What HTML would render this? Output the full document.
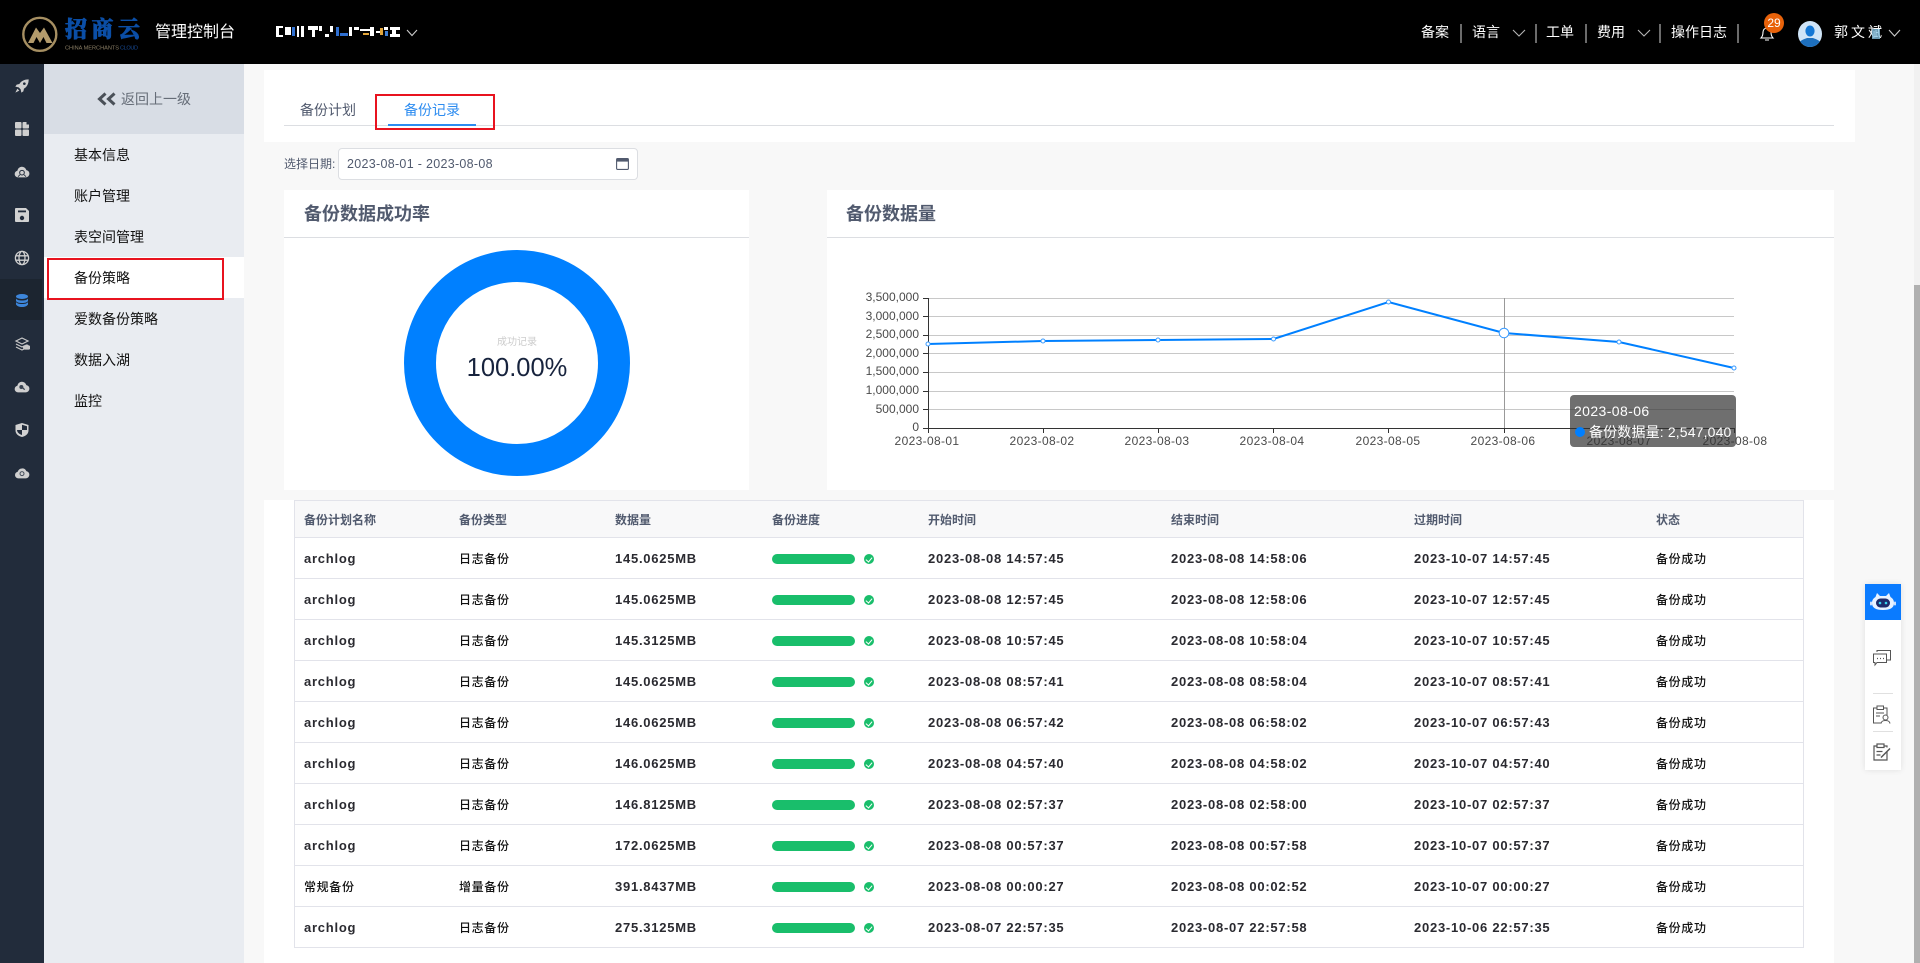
<!DOCTYPE html>
<html lang="zh-CN">
<head>
<meta charset="utf-8">
<title>备份记录</title>
<style>
*{box-sizing:border-box}
html,body{margin:0;padding:0;width:1920px;height:963px;overflow:hidden;background:#f8f8f8;font-family:"Liberation Sans","Noto Sans CJK SC",sans-serif;color:#333}
.a{position:absolute;white-space:nowrap}
.top{left:0;top:0;width:1920px;height:64px;background:#000}
.w{color:#fff;font-size:14px;line-height:20px;top:22px}
.sep{top:24px;width:2px;height:19px;background:#6b6b6b}
.rail{left:0;top:64px;width:44px;height:899px;background:#222c3b}
.ri{left:14px;width:16px;height:16px;display:block}
.sub{left:44px;top:64px;width:200px;height:899px;background:#e9ecf1}
.m{left:74px;font-size:14px;line-height:20px;color:#111}
.card{background:#fff}
.ct{font-size:18px;font-weight:bold;color:#515a6e;line-height:24px}
.hl{height:1px;background:#dcdee2}
table{border-collapse:separate;border-spacing:0;table-layout:fixed;width:1508px}
th,td{padding:0 0 0 8px;font-size:12px;text-align:left;white-space:nowrap;border-bottom:1px solid #e2e3ea}
th{height:37px;background:#f8f8f9;color:#515a6e;font-weight:bold}
td{height:41px;color:#2a2a30;font-weight:bold;font-size:13px;letter-spacing:.75px}
td.c{font-weight:500;font-size:12px;letter-spacing:.65px;color:#111}
th:first-child,td:first-child{padding-left:9px}
.b{display:inline-block;width:83px;height:10px;border-radius:5px;background:#19be6b;vertical-align:middle}
.k{display:inline-block;position:relative;width:10px;height:10px;border-radius:50%;background:#19be6b;margin-left:9px;vertical-align:middle}
.k:after{content:"";position:absolute;left:3px;top:2px;width:3px;height:5px;border:solid #fff;border-width:0 1px 1px 0;transform:rotate(40deg)}
.xl{font-size:12px;line-height:14px;color:#4a4a4a;top:434px;width:80px;text-align:center;letter-spacing:.35px}
.yl{font-size:12px;line-height:14px;color:#4a4a4a;width:60px;text-align:right;left:859px}
</style>
</head>
<body>
<div class="a top"></div>
<svg class="a" style="left:18px;top:12px" width="46" height="46" viewBox="18 12 46 46">
<circle cx="39.8" cy="34.3" r="16.5" fill="none" stroke="#a68f62" stroke-width="2.4"/>
<path d="M28 43L36 27.5L40 33L44 27.5L52.5 43H46.5L43.5 37L40 43L36.5 37L33.5 43Z" fill="#b39b6c"/>
</svg>
<div class="a" style="left:65px;top:15px;font:900 22px/30px 'Liberation Serif','Noto Serif CJK SC',serif;color:#0b4ea6;letter-spacing:4.5px;-webkit-text-stroke:.7px #0b4ea6">招商云</div>
<svg class="a" style="left:65px;top:43px" width="76" height="8"><text x="0" y="6.5" font-family="Liberation Sans" font-size="5.6" fill="#8b7f66" textLength="54">CHINA MERCHANTS</text><text x="55" y="6.5" font-family="Liberation Sans" font-size="5.6" fill="#174a94" textLength="18">CLOUD</text></svg>
<div class="a" style="left:155px;top:21px;font-size:16px;line-height:24px;color:#fff">管理控制台</div>
<svg class="a" style="left:276px;top:26px" width="124" height="11">
<path fill="#fff" d="M0 0h7v2H3v7h4v2H0zM9 1h6v8H9zM21 0h2v11h-2zM25 0h3v11h-3zM32 0h10v4h-3v7h-3V4h-4zM43 0h3v5h-3zM49 8h4v3h-4zM54 0h3v6h-3z"/>
<path fill="#2f6fd0" d="M16 1h3v9h-3zM60 1h3v9h-3zM64 7h8v3h-8z"/>
<path fill="#fff" d="M73 1h3v9h-3zM78 1h5v3h-5zM84 3h10v2H84zM94 1h4v9h-4zM100 5h5v2h-5zM108 1h4v3h-4zM114 1h10v3h-10zM114 8h10v3h-10zM116 4h4v4h-4z"/>
<path fill="#e3a63a" d="M87 7h6v2h-6zM104 2h3v7h-3z"/>
<path fill="#3e7fd6" d="M109 5h3v5h-3z"/>
</svg>
<svg class="a" style="left:406px;top:29px" width="12" height="8"><path d="M1 1l5 5.5L11 1" fill="none" stroke="#c9c9c9" stroke-width="1.1"/></svg>

<div class="a w" style="left:1421px">备案</div><div class="a sep" style="left:1460px"></div>
<div class="a w" style="left:1472px">语言</div>
<svg class="a" style="left:1512px;top:29px" width="14" height="8"><path d="M1 1l6 6 6-6" fill="none" stroke="#b5b5b5" stroke-width="1.1"/></svg>
<div class="a sep" style="left:1535px"></div>
<div class="a w" style="left:1546px">工单</div><div class="a sep" style="left:1585px"></div>
<div class="a w" style="left:1597px">费用</div>
<svg class="a" style="left:1637px;top:29px" width="14" height="8"><path d="M1 1l6 6 6-6" fill="none" stroke="#b5b5b5" stroke-width="1.1"/></svg>
<div class="a sep" style="left:1659px"></div>
<div class="a w" style="left:1671px">操作日志</div><div class="a sep" style="left:1737px"></div>
<svg class="a" style="left:1759px;top:24px" width="16" height="18" viewBox="0 0 16 18"><path d="M2 14c1.500-1.500 2-3 2-6a4 4 0 0 1 8 0c0 3 .5 4.500 2 6zM6 16h4" fill="none" stroke="#fff" stroke-width="1.100"/></svg>
<div class="a" style="left:1764px;top:13px;width:20px;height:20px;border-radius:50%;background:#e8620a;color:#fff;font-size:12px;line-height:20px;text-align:center">29</div>
<svg class="a" style="left:1798px;top:21px" width="24" height="26" viewBox="0 0 24 26"><defs><clipPath id="av"><ellipse cx="12" cy="13" rx="12" ry="13"/></clipPath></defs><g clip-path="url(#av)"><rect width="24" height="26" fill="#cfe4f7"/><ellipse cx="12" cy="10" rx="4.600" ry="5.500" fill="#1477d4"/><path d="M0 26v-3c2-4 7-5 9-6h6c2 1 7 2 9 6v3z" fill="#1d6fbd"/></g></svg>
<div class="a w" style="left:1834px;letter-spacing:3px;font-size:14px">郭文斌</div>
<div class="a" style="left:1872px;top:29px;width:8px;height:10px;background:#8ec9ea;opacity:.75"></div>
<svg class="a" style="left:1888px;top:29px" width="13" height="8"><path d="M1 1l5.500 6L12 1" fill="none" stroke="#c9c9c9" stroke-width="1.1"/></svg>

<!-- rail -->
<div class="a rail"></div>
<div class="a" style="left:0;top:279px;width:42px;height:41px;background:#1c2530"></div>
<svg class="a ri" style="top:78px" viewBox="0 0 24 24" fill="#cfcfcf"><path d="M22 2c-6 0-11 2-14 7l-4 1-2 3 5 1 3 3 1 5 3-2 1-4c5-3 7-8 7-14z"/><circle cx="15.500" cy="8.500" r="2" fill="#222c3b"/><path d="M5 16l-3 6 6-3z"/></svg>
<svg class="a ri" style="top:121px" viewBox="0 0 16 16"><rect x="1" y="1" width="6.500" height="6.500" rx="1" fill="#cfcfcf"/><rect x="8.500" y="1" width="6.500" height="6.500" rx="1" fill="#cfcfcf"/><rect x="12.500" y="1" width="2.500" height="2.500" fill="#222c3b"/><rect x="1" y="8.500" width="6.500" height="6.500" rx="1" fill="#cfcfcf"/><rect x="8.500" y="8.500" width="6.500" height="6.500" rx="1" fill="#cfcfcf"/></svg>
<svg class="a ri" style="top:164px" viewBox="0 0 24 24"><path d="M6 20a5 5 0 0 1-1-9.900 7 7 0 0 1 13.600-1A5.500 5.500 0 0 1 18 20z" fill="#cfcfcf"/><circle cx="12" cy="13" r="3.500" fill="none" stroke="#222c3b" stroke-width="1.500"/><path d="M6 19l3-3M18 19l-3-3" stroke="#222c3b" stroke-width="1.200"/></svg>
<svg class="a ri" style="top:207px" viewBox="0 0 16 16"><path d="M2 1h10l3 3v10a1 1 0 0 1-1 1H2a1 1 0 0 1-1-1V2a1 1 0 0 1 1-1z" fill="#d2d2d2"/><rect x="4" y="3.500" width="8" height="1.800" fill="#222c3b"/><circle cx="8" cy="11" r="2.200" fill="#222c3b"/></svg>
<svg class="a ri" style="top:250px" viewBox="0 0 16 16" fill="none" stroke="#cfcfcf" stroke-width="1.300"><circle cx="8" cy="8" r="6.600"/><ellipse cx="8" cy="8" rx="3" ry="6.600"/><path d="M1.500 5.800h13M1.500 10.200h13"/></svg>
<svg class="a ri" style="top:293px" viewBox="0 0 16 16" fill="#3d86da"><ellipse cx="8" cy="3.500" rx="6" ry="2.500"/><path d="M2 5.500c1 1.500 3 2 6 2s5-.5 6-2v2.500c-1 1.500-3 2-6 2s-5-.5-6-2zM2 9c1 1.500 3 2 6 2s5-.5 6-2v2.500c-1 1.500-3 2.500-6 2.500s-5-1-6-2.500z"/></svg>
<svg class="a ri" style="top:336px" viewBox="0 0 16 16" fill="none" stroke="#c8c8c8" stroke-width="1.200"><path d="M2 5l6-3 6 3-6 3zM2 8l6 3 3-1.500M2 11l6 3 2-1"/><path d="M11 13a1.500 1.500 0 0 1 0-3 2 2 0 0 1 3.500 0 1.500 1.500 0 0 1 0 3z" fill="#c8c8c8"/></svg>
<svg class="a ri" style="top:379px" viewBox="0 0 24 24"><path d="M6 20a5 5 0 0 1-1-9.900 7 7 0 0 1 13.600-1A5.500 5.500 0 0 1 18 20z" fill="#cfcfcf"/><circle cx="11" cy="12" r="3" fill="#3a4452"/><path d="M13 13l3 3" stroke="#3a4452" stroke-width="2"/></svg>
<svg class="a ri" style="top:422px" viewBox="0 0 16 16"><path d="M8 1l6.500 2v5.500c0 3.500-3 5.800-6.500 6.500-3.500-.7-6.500-3-6.500-6.500V3z" fill="#d2d2d2"/><path d="M8 2.800L13 4.300V8H8zM8 8H3c.2 2.500 2.400 4.300 5 5z" fill="#222c3b"/></svg>
<svg class="a ri" style="top:465px" viewBox="0 0 24 24"><path d="M6.500 20a5 5 0 0 1-1-9.900 7 7 0 0 1 13-1A5.500 5.500 0 0 1 18 20z" fill="#cfcfcf"/><circle cx="12" cy="13" r="3" fill="none" stroke="#3a4452" stroke-width="1.400"/></svg>

<!-- sub nav -->
<div class="a sub"></div>
<div class="a" style="left:44px;top:64px;width:200px;height:70px;background:#d8dde5"></div>
<svg class="a" style="left:97px;top:92px" width="21" height="14"><path d="M8.500 1.500L2.500 7l6 5.500M17.500 1.500L11.500 7l6 5.500" fill="none" stroke="#4a5058" stroke-width="3"/></svg>
<div class="a" style="left:121px;top:89px;font-size:14px;line-height:20px;color:#666d78">返回上一级</div>
<div class="a m" style="top:145px">基本信息</div>
<div class="a m" style="top:186px">账户管理</div>
<div class="a m" style="top:227px">表空间管理</div>
<div class="a" style="left:44px;top:257px;width:200px;height:41px;background:#fff"></div>
<div class="a" style="left:47px;top:258px;width:177px;height:42px;border:2.500px solid #e8131f"></div>
<div class="a m" style="top:268px">备份策略</div>
<div class="a m" style="top:309px">爱数备份策略</div>
<div class="a m" style="top:350px">数据入湖</div>
<div class="a m" style="top:391px">监控</div>

<!-- tabs -->
<div class="a card" style="left:264px;top:70px;width:1591px;height:72px"></div>
<div class="a" style="left:284px;top:125px;width:1550px;height:1px;background:#dcdee2"></div>
<div class="a" style="left:300px;top:100px;font-size:14px;line-height:20px;color:#515a6e">备份计划</div>
<div class="a" style="left:404px;top:100px;font-size:14px;line-height:20px;color:#2d8cf0">备份记录</div>
<div class="a" style="left:388px;top:124px;width:88px;height:2px;background:#2d8cf0"></div>
<div class="a" style="left:375px;top:94px;width:120px;height:36px;border:2px solid #e8131f"></div>

<!-- date -->
<div class="a" style="left:284px;top:155px;font-size:12px;line-height:18px;color:#515a6e">选择日期:</div>
<div class="a" style="left:338px;top:148px;width:300px;height:32px;background:#fff;border:1px solid #dcdee2;border-radius:4px"></div>
<div class="a" style="left:347px;top:155px;font-size:12.500px;line-height:18px;color:#515a6e;letter-spacing:.3px">2023-08-01 - 2023-08-08</div>
<svg class="a" style="left:616px;top:158px" width="13" height="12"><rect x=".6" y=".6" width="11.800" height="10.800" rx="1" fill="none" stroke="#515a6e" stroke-width="1.100"/><rect x="1" y="1" width="11" height="2.600" fill="#515a6e"/></svg>

<!-- left card -->
<div class="a card" style="left:284px;top:190px;width:465px;height:300px"></div>
<div class="a ct" style="left:304px;top:202px">备份数据成功率</div>
<div class="a hl" style="left:284px;top:237px;width:465px"></div>
<svg class="a" style="left:397px;top:243px" width="240" height="240"><circle cx="120" cy="120" r="97" fill="none" stroke="#0080ff" stroke-width="32"/></svg>
<div class="a" style="left:467px;top:336px;width:100px;text-align:center;font-size:10px;line-height:14px;color:#ccc">成功记录</div>
<div class="a" style="left:447px;top:351px;width:140px;text-align:center;font-size:25.500px;line-height:34px;color:#17233d">100.00%</div>

<!-- right card -->
<div class="a card" style="left:827px;top:190px;width:1007px;height:300px"></div>
<div class="a ct" style="left:846px;top:202px">备份数据量</div>
<div class="a hl" style="left:827px;top:237px;width:1007px"></div>
<svg class="a" style="left:900px;top:280px" width="860" height="170" viewBox="900 280 860 170">
<g stroke="#c8c8c8" stroke-width="1" fill="none"><path d="M928 298.500H1734M928 316.500H1734M928 335.500H1734M928 353.500H1734M928 372.500H1734M928 391.500H1734M928 409.500H1734"/></g>
<g stroke="#333" stroke-width="1" fill="none"><path d="M928.500 298V433M923 298.500H928M923 316.500H928M923 335.500H928M923 353.500H928M923 372.500H928M923 391.500H928M923 409.500H928M923 428.500H1734M1043.500 428V433M1158.500 428V433M1273.500 428V433M1388.500 428V433M1504.500 428V433M1619.500 428V433M1734.500 428V433"/></g>
<path d="M1504.500 298V428" stroke="#999" stroke-width="1"/>
<polyline points="928,344 1043,341 1158,340 1273.500,339 1388.500,302 1504,333 1619,342 1734,368" fill="none" stroke="#0080ff" stroke-width="2"/>
<g fill="#fff" stroke="#3a9bff" stroke-width="1"><circle cx="928" cy="344" r="2"/><circle cx="1043" cy="341" r="2"/><circle cx="1158" cy="340" r="2"/><circle cx="1273.500" cy="339" r="2"/><circle cx="1388.500" cy="302" r="2"/><circle cx="1619" cy="342" r="2"/><circle cx="1734" cy="368" r="2"/><circle cx="1504" cy="333" r="4.800"/></g>
</svg>
<div class="a yl" style="top:290px">3,500,000</div>
<div class="a yl" style="top:309px">3,000,000</div>
<div class="a yl" style="top:327px">2,500,000</div>
<div class="a yl" style="top:346px">2,000,000</div>
<div class="a yl" style="top:364px">1,500,000</div>
<div class="a yl" style="top:383px">1,000,000</div>
<div class="a yl" style="top:402px">500,000</div>
<div class="a yl" style="top:420px">0</div>
<div class="a xl" style="left:887px">2023-08-01</div>
<div class="a xl" style="left:1002px">2023-08-02</div>
<div class="a xl" style="left:1117px">2023-08-03</div>
<div class="a xl" style="left:1232px">2023-08-04</div>
<div class="a xl" style="left:1348px">2023-08-05</div>
<div class="a xl" style="left:1463px">2023-08-06</div>
<div class="a xl" style="left:1579px">2023-08-07</div>
<div class="a xl" style="left:1695px">2023-08-08</div>
<div class="a" style="left:1570px;top:395px;width:166px;height:52px;background:rgba(50,50,50,.7);border-radius:4px"></div>
<div class="a" style="left:1574px;top:401px;font-size:14px;line-height:20px;color:#fff;letter-spacing:.4px">2023-08-06</div>
<div class="a" style="left:1575px;top:427px;width:10px;height:10px;border-radius:50%;background:#007fff"></div>
<div class="a" style="left:1589px;top:422px;font-size:14px;line-height:20px;color:#fff;letter-spacing:.15px">备份数据量: 2,547,040</div>

<!-- table -->
<div class="a card" style="left:264px;top:500px;width:1570px;height:463px"></div>
<div class="a" style="left:294px;top:500px;width:1510px;height:448px;border:1px solid #e2e3ea;border-bottom:0">
<table>
<colgroup><col style="width:156px"><col style="width:156px"><col style="width:157px"><col style="width:156px"><col style="width:243px"><col style="width:243px"><col style="width:242px"><col style="width:155px"></colgroup>
<tr><th>备份计划名称</th><th>备份类型</th><th>数据量</th><th>备份进度</th><th>开始时间</th><th>结束时间</th><th>过期时间</th><th>状态</th></tr>
<tr><td>archlog</td><td class="c">日志备份</td><td>145.0625MB</td><td><i class="b"></i><i class="k"></i></td><td>2023-08-08 14:57:45</td><td>2023-08-08 14:58:06</td><td>2023-10-07 14:57:45</td><td class="c">备份成功</td></tr>
<tr><td>archlog</td><td class="c">日志备份</td><td>145.0625MB</td><td><i class="b"></i><i class="k"></i></td><td>2023-08-08 12:57:45</td><td>2023-08-08 12:58:06</td><td>2023-10-07 12:57:45</td><td class="c">备份成功</td></tr>
<tr><td>archlog</td><td class="c">日志备份</td><td>145.3125MB</td><td><i class="b"></i><i class="k"></i></td><td>2023-08-08 10:57:45</td><td>2023-08-08 10:58:04</td><td>2023-10-07 10:57:45</td><td class="c">备份成功</td></tr>
<tr><td>archlog</td><td class="c">日志备份</td><td>145.0625MB</td><td><i class="b"></i><i class="k"></i></td><td>2023-08-08 08:57:41</td><td>2023-08-08 08:58:04</td><td>2023-10-07 08:57:41</td><td class="c">备份成功</td></tr>
<tr><td>archlog</td><td class="c">日志备份</td><td>146.0625MB</td><td><i class="b"></i><i class="k"></i></td><td>2023-08-08 06:57:42</td><td>2023-08-08 06:58:02</td><td>2023-10-07 06:57:43</td><td class="c">备份成功</td></tr>
<tr><td>archlog</td><td class="c">日志备份</td><td>146.0625MB</td><td><i class="b"></i><i class="k"></i></td><td>2023-08-08 04:57:40</td><td>2023-08-08 04:58:02</td><td>2023-10-07 04:57:40</td><td class="c">备份成功</td></tr>
<tr><td>archlog</td><td class="c">日志备份</td><td>146.8125MB</td><td><i class="b"></i><i class="k"></i></td><td>2023-08-08 02:57:37</td><td>2023-08-08 02:58:00</td><td>2023-10-07 02:57:37</td><td class="c">备份成功</td></tr>
<tr><td>archlog</td><td class="c">日志备份</td><td>172.0625MB</td><td><i class="b"></i><i class="k"></i></td><td>2023-08-08 00:57:37</td><td>2023-08-08 00:57:58</td><td>2023-10-07 00:57:37</td><td class="c">备份成功</td></tr>
<tr><td class="c">常规备份</td><td class="c">增量备份</td><td>391.8437MB</td><td><i class="b"></i><i class="k"></i></td><td>2023-08-08 00:00:27</td><td>2023-08-08 00:02:52</td><td>2023-10-07 00:00:27</td><td class="c">备份成功</td></tr>
<tr><td>archlog</td><td class="c">日志备份</td><td>275.3125MB</td><td><i class="b"></i><i class="k"></i></td><td>2023-08-07 22:57:35</td><td>2023-08-07 22:57:58</td><td>2023-10-06 22:57:35</td><td class="c">备份成功</td></tr>
</table>
</div>

<!-- scrollbar -->
<div class="a" style="left:1914px;top:64px;width:6px;height:899px;background:#f1f1f1"></div>
<div class="a" style="left:1914px;top:285px;width:6px;height:678px;background:#b0b0b0"></div>

<!-- float -->
<div class="a" style="left:1865px;top:584px;width:36px;height:186px;background:#fff;box-shadow:0 0 6px rgba(0,0,0,.1)"></div>
<div class="a" style="left:1865px;top:584px;width:36px;height:36px;background:#0a7bff"></div>
<svg class="a" style="left:1869px;top:590px" width="28" height="24" viewBox="0 0 28 24"><path d="M8 3l3 3h6l3-3 1.500 4c2.500 1.500 3.500 3.500 3.500 6 0 5-4 7-11 7S3 18 3 13c0-2.500 1-4.500 3.500-6z" fill="#e8f2ff"/><rect x="7" y="8.500" width="14" height="9" rx="4.500" fill="#1d2a6b"/><circle cx="11" cy="13" r="1.300" fill="#38d6f0"/><circle cx="17" cy="13" r="1.300" fill="#38d6f0"/><rect x="1" y="11.500" width="2" height="4" rx="1" fill="#cfe2ff"/><rect x="25" y="11.500" width="2" height="4" rx="1" fill="#cfe2ff"/></svg>
<svg class="a" style="left:1872px;top:649px" width="20" height="18" viewBox="0 0 20 18" fill="none" stroke="#555" stroke-width="1"><path d="M1.500 5h13v8.500H5L3 16v-2.500H1.500z"/><path d="M5 3V1.500h13.500V11H15"/><path d="M5 9.500h1M8 9.500h1M11 9.500h1" stroke-width="1.300"/></svg>
<div class="a" style="left:1873px;top:693px;width:20px;height:1px;background:#e0e0e0"></div>
<svg class="a" style="left:1872px;top:705px" width="20" height="20" viewBox="0 0 20 20" fill="none" stroke="#555" stroke-width="1"><path d="M9 18H1.500V3H15v7"/><rect x="5" y="1" width="6.500" height="3.500" fill="#fff"/><path d="M4 8h8M4 11h4"/><circle cx="13.500" cy="12.500" r="2.500"/><path d="M9 18.500c.5-2.500 2-3 4.500-3s4 .5 4.500 3"/></svg>
<div class="a" style="left:1873px;top:731px;width:20px;height:1px;background:#e0e0e0"></div>
<svg class="a" style="left:1872px;top:743px" width="20" height="20" viewBox="0 0 20 20" fill="none" stroke="#555" stroke-width="1.200"><path d="M15 9v8H2V3h13v1.500"/><rect x="5" y="1" width="7" height="3.500" fill="#fff"/><path d="M4.500 8.500h6M4.500 12h4"/><path d="M9 14.500l9-9" stroke-width="1.500"/></svg>
</body>
</html>
